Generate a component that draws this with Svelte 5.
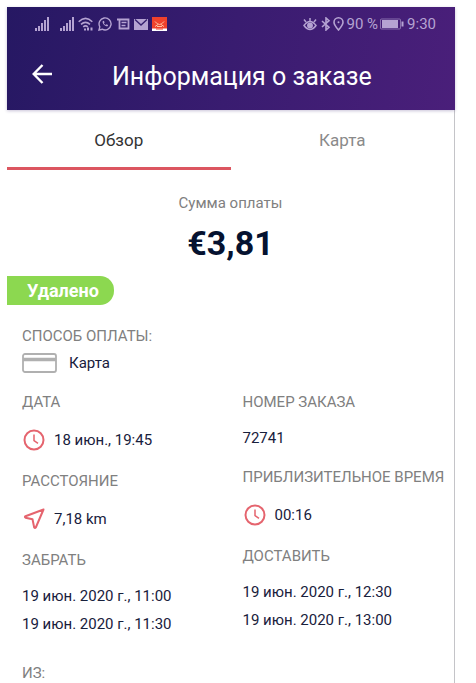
<script lang="ts">
	type Tab = "overview" | "map";
	let tab: Tab = $state("overview");

	const bars = [3, 5, 8, 11, 14];
</script>

{#snippet signal()}
	<svg width="14" height="14" viewBox="0 0 14 14" fill="currentColor">
		{#each bars as h, i}
			<rect x={i * 3} y={14 - h} width="2" height={h} />
		{/each}
	</svg>
{/snippet}

{#snippet clock()}
	<svg class="accent" width="24" height="24" viewBox="0 0 24 24">
		<circle cx="12" cy="12" r="9.5" />
		<path d="M12 6.5v6l4 2.8" stroke-width="1.5" />
	</svg>
{/snippet}

<main class="screen">
	<header>
		<div class="status">
			<div class="status-left">
				{@render signal()}
				<span class="sim">{@render signal()}</span>
				<svg width="16" height="14" viewBox="0 0 16 14" fill="none" stroke="currentColor" stroke-width="1.6">
					<path d="M.7 4.7Q7.5-2 14.3 4.7M3 7.4q4.5-4 9 0M5.2 9.9q2.3-2 4.6 0" />
					<path d="M6 12.5h2M10 10.5v3M13.5 10.5v3" stroke-width="2" />
				</svg>
				<svg width="14" height="14" viewBox="0 0 14 14" fill="none" stroke="currentColor">
					<path d="M1 13l.8-3.2A6 6 0 1 1 4.2 12.2Z" stroke-width="1.4" />
					<path d="M4.7 4.2c-.8 2 2.8 5.8 5 5l.4-1.2-1.6-.8-.9.7q-1.2-.5-1.700-1.700l.7-.8-.7-1.600Z" fill="currentColor" stroke="none" />
				</svg>
				<svg width="14" height="14" viewBox="0 0 14 14" fill="none" stroke="currentColor">
					<path d="M1 2.5h11.5v9H3.5v-8.5" stroke-width="1.8" />
					<path d="M5.5 5.5h5M5.5 8.5h4" stroke-width="1.3" />
				</svg>
				<svg width="14" height="14" viewBox="0 0 14 14">
					<path d="M0 2h14v11H0Z" fill="currentColor" />
					<path d="M1 2.5l6 5.5 6-5.5" fill="none" stroke="#35206e" stroke-width="1.4" />
				</svg>
				<svg width="15" height="14" viewBox="0 0 15 14">
					<path d="M0 0h15v14H0Z" fill="#f0412c" />
					<path d="M0 11.5h15V14H0Z" fill="#fff" />
					<path d="M3 4.5q4.5 6 9 0M3 9.500l3-2M12 9.500l-3-2M5 9.500h5" fill="none" stroke="#ffc3a4" />
					<path d="M4 12h7" stroke="#f0412c" />
				</svg>
			</div>
			<div class="status-right">
				<svg width="14" height="14" viewBox="0 0 14 14" fill="none" stroke="currentColor" stroke-width="1.5">
					<path d="M1 8.5q6-8 12 0-6 8-12 0ZM1 2.500l2 2.500M7 1v3M13 2.500l-2 2.500" />
					<circle cx="7" cy="8.5" r="2.200" fill="currentColor" />
				</svg>
				<svg class="bluetooth" width="10" height="14" viewBox="0 0 10 14" fill="none" stroke="currentColor" stroke-width="1.6">
					<path d="M1 4l7 6.3L5 13V1l3 2.7L1 10" />
				</svg>
				<svg width="11" height="14" viewBox="0 0 11 14" fill="none" stroke="currentColor" stroke-width="1.6">
					<path d="M5.5 13Q1 8 1 5.300a4.500 4.500 0 0 1 9 0Q10 8 5.500 13Z" />
					<circle cx="5.5" cy="5.300" r="1" fill="currentColor" stroke="none" />
				</svg>
				<span>90 %</span>
				<svg class="battery" width="24" height="12" viewBox="0 0 24 12" fill="none" stroke="currentColor">
					<rect x=".5" y="1" width="20" height="10" rx="1" opacity=".6" />
					<path d="M2 2h16v8H2Z" fill="currentColor" stroke="none" />
					<path d="M22.500 3.500v5" stroke-width="2" />
				</svg>
				<span>9:30</span>
			</div>
		</div>
		<div class="title-bar">
			<button class="back" aria-label="Назад">
				<svg width="20" height="20" viewBox="0 0 20 20" fill="none" stroke="currentColor" stroke-width="2.4">
					<path d="M20 10H2M10.500 1L1.700 10l8.800 9" />
				</svg>
			</button>
			<h1>Информация о заказе</h1>
		</div>
	</header>

	<nav class="tabs">
		<button class:active={tab === "overview"} onclick={() => (tab = "overview")}>Обзор</button>
		<button class:active={tab === "map"} onclick={() => (tab = "map")}>Карта</button>
	</nav>

	<section class="total">
		<p class="caption">Сумма оплаты</p>
		<p class="amount">€3,81</p>
	</section>

	<span class="badge">Удалено</span>

	<section class="payment">
		<h2>СПОСОБ ОПЛАТЫ:</h2>
		<p class="row method">
			<svg width="35" height="20" viewBox="0 0 35 20" fill="none" stroke="#b0b0b0">
				<rect x="1" y="1" width="33" height="18" rx="2" stroke-width="1.8" />
				<path d="M1 6.500h33" stroke-width="3.4" />
			</svg>
			Карта
		</p>
	</section>

	<div class="details">
		<div class="column">
			<section>
				<h2>ДАТА</h2>
				<p class="row">{@render clock()}18 июн., 19:45</p>
			</section>
			<section>
				<h2>РАССТОЯНИЕ</h2>
				<p class="row">
					<svg class="accent" width="24" height="24" viewBox="0 0 24 24">
						<path d="M21.500 2.500L3.500 9.200q-1.200.8 0 1.500l7 1.500 1.700 8.300q.8 1.200 1.600 0Z" stroke-linejoin="round" />
					</svg>
					7,18 km
				</p>
			</section>
			<section>
				<h2>ЗАБРАТЬ</h2>
				<p class="slot">19 июн. 2020 г., 11:00</p>
				<p class="slot">19 июн. 2020 г., 11:30</p>
			</section>
		</div>
		<div class="column">
			<section>
				<h2>НОМЕР ЗАКАЗА</h2>
				<p>72741</p>
			</section>
			<section>
				<h2>ПРИБЛИЗИТЕЛЬНОЕ ВРЕМЯ</h2>
				<p class="row">{@render clock()}00:16</p>
			</section>
			<section>
				<h2>ДОСТАВИТЬ</h2>
				<p class="slot">19 июн. 2020 г., 12:30</p>
				<p class="slot">19 июн. 2020 г., 13:00</p>
			</section>
		</div>
	</div>

	<section class="from">
		<h2>ИЗ:</h2>
	</section>
</main>

<style>
	:global(body) {
		background: #fff;
	}

	.screen {
		box-sizing: border-box;
		margin: 7px 21px 0 7px;
		min-height: calc(100vh - 7px);
		border-right: 1px solid #c4c4c8;
		font: 15px/20px Roboto, "Noto Sans", sans-serif;
		color: #18203c;
	}

	h1,
	h2,
	p {
		margin: 0;
		font-weight: 400;
	}

	button {
		padding: 0;
		border: 0;
		background: none;
		font: inherit;
		color: inherit;
	}

	svg {
		flex: none;
	}

	header {
		margin-right: -1px;
		background: linear-gradient(100deg, #261863, #391c70 50%, #4a1f7a);
		box-shadow: 0 1px 3px #39206e44;
		color: #fff;
	}

	.status {
		display: flex;
		justify-content: space-between;
		height: 34px;
		padding: 0 19px 0 28px;
		color: #b5a3d2;
	}
	.status-left,
	.status-right {
		display: flex;
		align-items: center;
		gap: 4px;
	}
	.status-right {
		gap: 2px;
	}
	.sim {
		display: flex;
		margin-left: 7px;
	}
	.bluetooth {
		margin-left: 2px;
	}
	.battery {
		margin-right: 1px;
	}

	.title-bar {
		display: flex;
		align-items: center;
		gap: 60px;
		height: 69px;
		padding-left: 25px;
	}
	.back {
		display: flex;
		padding-bottom: 4px;
	}
	h1 {
		padding-top: 2px;
		font-size: 25px;
		line-height: 32px;
		white-space: nowrap;
	}

	.tabs {
		display: grid;
		grid-template-columns: 1fr 1fr;
	}
	.tabs button {
		height: 60px;
		border-top: 3px solid transparent;
		border-bottom: 3px solid transparent;
		font-size: 17px;
		color: #8a8a8a;
	}
	.tabs .active {
		border-bottom-color: #dc5660;
		color: #333;
	}

	.total {
		padding: 23px 0 13px;
		text-align: center;
	}
	.caption {
		color: #808080;
	}
	.amount {
		margin-top: 10px;
		font-size: 34px;
		font-weight: 700;
		line-height: 40px;
		color: #051230;
	}

	.badge {
		display: block;
		width: fit-content;
		padding: 0 15px 0 20px;
		border-radius: 0 14px 14px 0;
		background: #8cd850;
		font-size: 18px;
		font-weight: 700;
		line-height: 29px;
		color: #fff;
	}

	.payment {
		padding: 21px 15px 17px;
	}
	h2 {
		font-size: 15px;
		line-height: 20px;
		white-space: nowrap;
		color: #808080;
	}
	.row {
		display: flex;
		align-items: center;
		gap: 8px;
		height: 24px;
	}
	.method {
		gap: 12px;
		margin-top: 5px;
	}
	.accent {
		fill: none;
		stroke: #e5646e;
		stroke-width: 2;
	}

	.details {
		display: grid;
		grid-template-columns: 1fr 1fr;
		column-gap: 9px;
		padding-left: 15px;
	}
	.column {
		display: flex;
		flex-direction: column;
		gap: 19px;
	}
	.column h2 {
		margin-bottom: 16px;
	}
	.slot + .slot {
		margin-top: 8px;
	}

	.from {
		padding: 29px 15px 0;
	}
</style>
